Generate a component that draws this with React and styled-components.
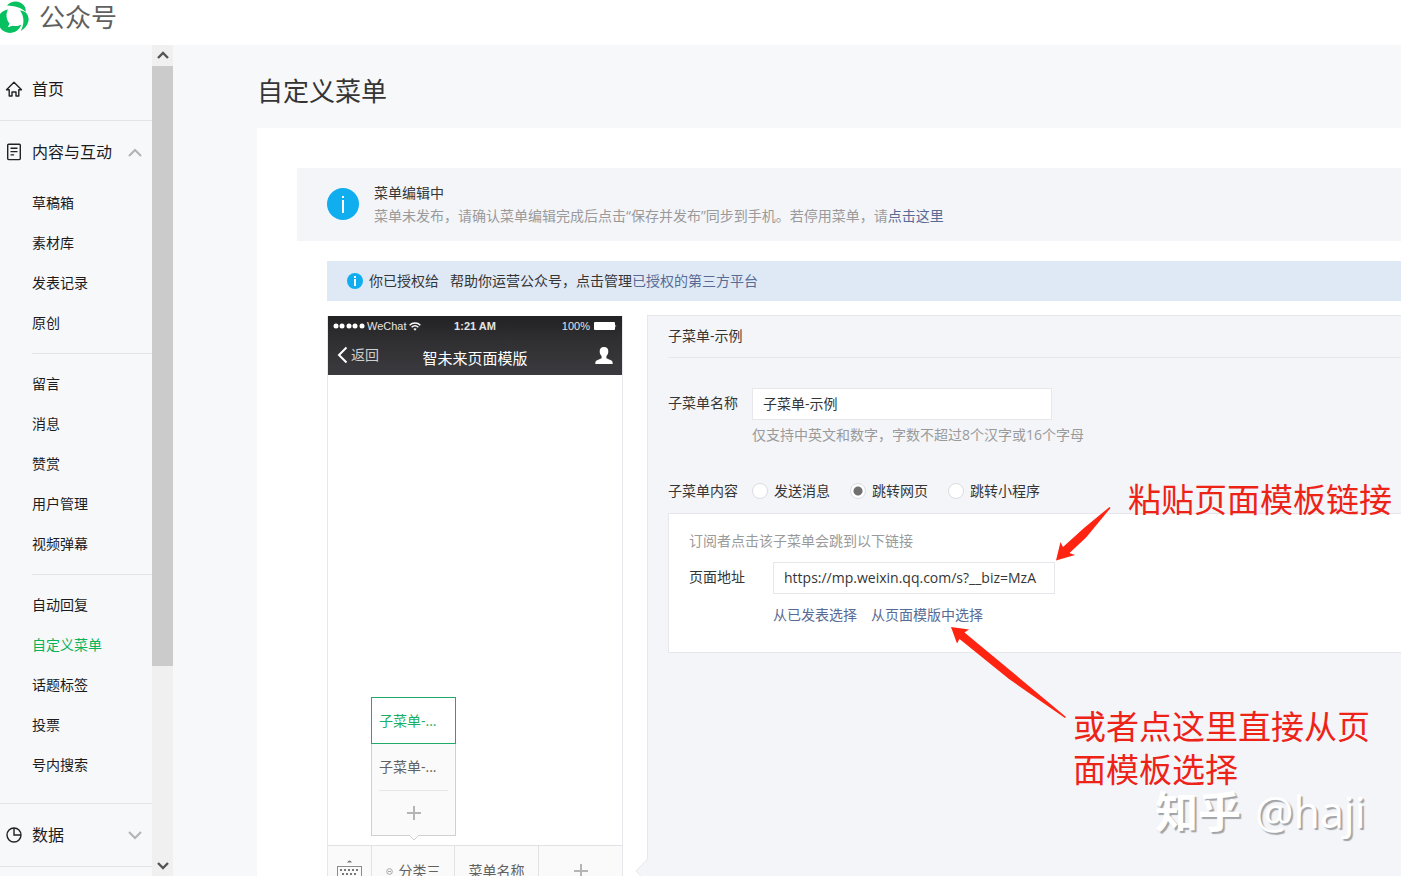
import React from "react";
import styled, { createGlobalStyle } from "styled-components";

const Global = createGlobalStyle`
  * { box-sizing: border-box; }
  body {
    margin: 0;
    background: #f7f8fa;
    color: #353535;
    font: 14px/20px "Open Sans", "Noto Sans CJK SC", sans-serif;
  }
  a { color: #576b95; text-decoration: none; }
  button { border: 0; padding: 0; background: none; color: inherit; font: inherit; cursor: pointer; }
  h1, h2, p, ul { margin: 0; padding: 0; font-weight: 400; }
  ul { list-style: none; }
`;

const Page = styled.div`
  display: flex;
  flex-direction: column;
  height: 100vh;
  overflow: hidden;
`;

const TopBar = styled.header`
  display: flex;
  flex: none;
  align-items: flex-start;
  gap: 9px;
  height: 45px;
  background: #fff;
`;

const Brand = styled.span`
  color: #606060;
  font-size: 26px;
  line-height: 34px;
`;

const Body = styled.div`
  display: flex;
  flex: 1;
  min-height: 0;
`;

/* Sidebar */

const Sidebar = styled.nav`
  flex: none;
  width: 152px;
  padding-top: 13px;
  overflow: hidden;
`;

const Section = styled.div`
  padding-bottom: ${(p) => (p.$open ? 18 : 0)}px;
  border-bottom: 1px solid #e4e5e8;
`;

const SectionHead = styled.button`
  display: flex;
  align-items: center;
  width: 100%;
  height: 62px;
  padding: 0 10px 0 5px;
  color: #1c1c1e;
  font-size: 16px;
  text-align: left;

  span { flex: 1; margin-left: 9px; }
`;

const Group = styled.ul`
  margin-left: 32px;

  & + & {
    margin-top: 10px;
    padding-top: 10px;
    border-top: 1px solid #e4e5e8;
  }
`;

const Item = styled.a`
  display: block;
  color: ${(p) => (p.$active ? "#07b35b" : "#1c1c1e")};
  line-height: 40px;
`;

const ScrollTrack = styled.div`
  display: flex;
  flex: none;
  flex-direction: column;
  width: 21px;
  background: #f0f0f0;
`;

const ScrollButton = styled.button`
  display: flex;
  align-items: center;
  justify-content: center;
  height: 21px;
`;

const ScrollSpace = styled.div`
  flex: 1;
`;

const ScrollThumb = styled.div`
  height: 76%;
  background: #cbcbcb;
`;

/* Content */

const Main = styled.main`
  display: flex;
  flex: 1;
  flex-direction: column;
  min-width: 0;
  padding: 30px 0 0 84px;
  overflow: hidden;
`;

const Title = styled.h1`
  flex: none;
  margin-bottom: 21px;
  color: #353535;
  font-size: 26px;
  line-height: 32px;
`;

const Card = styled.section`
  flex: 1 0 auto;
  padding: 40px 0 0 40px;
  background: #fff;
`;

const Alert = styled.div`
  display: flex;
  align-items: center;
  gap: 15px;
  padding: 13px 30px 14px;
  background: #f4f5f9;
  line-height: 23px;
  white-space: nowrap;
`;

const Muted = styled.p`
  color: #9a9a9a;
`;

const Inner = styled.div`
  padding: 20px 0 0 30px;
`;

const Notice = styled.div`
  display: flex;
  align-items: center;
  height: 40px;
  padding: 0 20px;
  gap: 6px;
  background: #dfe9f6;
  white-space: pre;
`;

const Editor = styled.div`
  display: flex;
  align-items: stretch;
  gap: 24px;
  margin-top: 14px;
`;

/* Phone preview */

const Phone = styled.div`
  display: flex;
  flex: none;
  flex-direction: column;
  width: 296px;
  height: 581px;
  margin-top: 1px;
  border: 1px solid #e7e7eb;
  border-top: 0;
`;

const PhoneHead = styled.div`
  flex: none;
  height: 59px;
  background: linear-gradient(#222224, #2f2f32 40%, #3b3b3f);
  color: #fff;
`;

const StatusBar = styled.div`
  display: grid;
  grid-template-columns: 1fr auto 1fr;
  align-items: center;
  height: 20px;
  padding: 0 5px;
  color: #e4e4e4;
  font: 11px/20px "Liberation Sans", sans-serif;
`;

const StatusSide = styled.span`
  display: flex;
  align-items: center;
  justify-content: ${(p) => (p.$end ? "flex-end" : "flex-start")};
  gap: ${(p) => (p.$end ? 4 : 2)}px;
`;

const NavBar = styled.div`
  display: grid;
  grid-template-columns: 1fr auto 1fr;
  align-items: center;
  height: 39px;
  padding: 0 9px;
`;

const Back = styled.button`
  display: flex;
  align-items: center;
  gap: 3px;
  padding-bottom: 2px;
  color: #cfcfcf;
`;

const PhoneTitle = styled.span`
  padding-top: 5px;
  font-size: 15px;
`;

const Avatar = styled.span`
  display: flex;
  justify-content: flex-end;
`;

const Chat = styled.div`
  display: flex;
  flex: 1;
  align-items: flex-end;
  padding: 0 0 9px 43px;
`;

const Popup = styled.div`
  position: relative;
  width: 85px;
  border: 1px solid #d0d0d0;
  border-top: 0;
  background: #fafafa;
`;

const PopupItem = styled.button`
  display: block;
  width: ${(p) => (p.$active ? 85 : 69)}px;
  height: ${(p) => (p.$active ? 47 : 46)}px;
  margin: ${(p) => (p.$active ? "0 -1px" : "0 7px")};
  padding: ${(p) => (p.$active ? "0 7px" : 0)};
  border: ${(p) => (p.$active ? "1px solid #22a868" : 0)};
  background: ${(p) => (p.$active ? "#fff" : "transparent")};
  color: ${(p) => (p.$active ? "#19b065" : "#616161")};
  text-align: left;
`;

const PopupAdd = styled.button`
  display: flex;
  align-items: center;
  justify-content: center;
  width: 69px;
  height: 45px;
  margin: 0 7px;
  border-top: 1px solid #e7e7eb;
`;

const PopupTail = styled.svg`
  position: absolute;
  top: 100%;
  left: 50%;
  margin: -1px 0 0 -6px;
`;

const MenuBar = styled.div`
  display: grid;
  grid-template-columns: 43px 83px 84px 1fr;
  flex: none;
  height: 51px;
  border-top: 1px solid #e2e2e4;
  background: #fafafa;
`;

const MenuTab = styled.button`
  display: flex;
  align-items: center;
  justify-content: center;
  gap: 6px;
  color: #616161;

  & + & { border-left: 1px solid #e2e2e4; }
`;

/* Form panel */

const Panel = styled.div`
  position: relative;
  flex: 1;
  min-width: 0;
  padding-left: 20px;
  border: 1px solid #e7e7eb;
  border-right: 0;
  background: #f4f5f9;
  white-space: nowrap;
`;

const PanelTail = styled.svg`
  position: absolute;
  top: 542px;
  left: -13px;
`;

const PanelTitle = styled.h2`
  height: 42px;
  border-bottom: 1px solid #e7e7eb;
  font-size: 14px;
  line-height: 40px;
`;

const Field = styled.div`
  display: flex;
  align-items: center;
  gap: 14px;
  margin-top: ${(p) => p.$top || 0}px;

  > label:first-child, > span:first-child { flex: none; width: 70px; }
  > label:first-child { padding-bottom: 2px; }
`;

const TextInput = styled.input`
  width: ${(p) => p.$width}px;
  height: 32px;
  padding: 0 10px 2px;
  border: 1px solid #e7e7eb;
  border-radius: 0;
  outline: 0;
  background: #fff;
  color: #353535;
  font: inherit;
`;

const FieldHint = styled(Muted)`
  margin: 5px 0 0 84px;
`;

const Options = styled.div`
  display: flex;
  gap: 20px;
`;

const Option = styled.label`
  display: flex;
  align-items: center;
  gap: 6px;
`;

const Radio = styled.input`
  appearance: none;
  width: 16px;
  height: 16px;
  margin: 0;
  border: 1px solid #dcdde0;
  border-radius: 50%;
  background: #fff;

  &:checked { background: radial-gradient(circle, #707070 0 4px, #fff 5px); }
`;

const LinkBox = styled.div`
  height: 140px;
  margin-top: 12px;
  padding: 17px 20px;
  border: 1px solid #e7e7eb;
  border-right: 0;
  background: #fff;
`;

const Picks = styled.div`
  display: flex;
  gap: 14px;
  margin: 11px 0 0 84px;
`;

/* Notes drawn over the screen */

const Note = styled.p`
  position: absolute;
  top: ${(p) => p.$y}px;
  left: ${(p) => p.$x}px;
  color: #ee2318;
  font-size: 33px;
  line-height: 43px;
`;

const Arrow = styled.svg`
  position: absolute;
  top: ${(p) => p.$y}px;
  left: ${(p) => p.$x}px;
`;

const Watermark = styled.div`
  position: absolute;
  top: 474px;
  left: 507px;
  display: flex;
  gap: 14px;
  color: #fff;
  font-size: 43px;
  line-height: 44px;
  text-shadow: 2px 2px 1px #a2a3a6;

  b { font-weight: 700; }
`;

const Plus = () => (
  <svg width="14" height="14" viewBox="0 0 14 14" stroke="#b5b5b5" strokeWidth="2" aria-hidden="true">
    <path d="M7 0v14M0 7h14" />
  </svg>
);

const Chevron = ({ up }) => (
  <svg width="14" height="9" viewBox="0 0 14 9" fill="none" stroke="#b2b3b5" strokeWidth="2" aria-hidden="true">
    <path d={up ? "M1 8l6-6 6 6" : "M1 1l6 6 6-6"} />
  </svg>
);

const ScrollArrow = ({ up }) => (
  <svg width="12" height="9" viewBox="0 0 12 9" fill="none" stroke="#555" strokeWidth="2.4" aria-hidden="true">
    <path d={up ? "M1 7l5-5 5 5" : "M1 2l5 5 5-5"} />
  </svg>
);

const Logo = () => (
  <svg width="30" height="34" viewBox="0 0 30 34" fill="#07c160" role="img" aria-label="logo">
    <path d="M7 5.500C11 1 19-.5 24 5.500c1.500 2 2 4 1.500 6.500C22 7.500 14 6 7 5.500z" />
    <path d="M20 10.500c2.500.2 4.500 1 6 2.200 4.500 5 3.500 13-5.500 18.500 3.500-6 4.500-14-.5-20.700z" />
    <path d="M8 9.500C5.500 14 6.200 20 9.500 23.500L7.800 27.200l4.700-1.500c3.200.8 6.200.3 8.700-1.200C18.500 34 5.500 36 0 27.500V14c2-2.500 5-4.200 8-4.500z" />
  </svg>
);

const iconProps = {
  width: 18, height: 18, viewBox: "0 0 18 18", fill: "none", stroke: "#222", strokeWidth: 1.4, "aria-hidden": true,
};

const HomeIcon = () => (
  <svg {...iconProps}>
    <path d="M1.500 9.700L9 2.200l7.500 7.500h-2.700v6.300h-2.800v-4H7v4H4.200V9.700z" strokeLinejoin="round" />
  </svg>
);

const DocIcon = () => (
  <svg {...iconProps}>
    <rect x="2.700" y="1.200" width="12.600" height="15.400" rx="1" />
    <path d="M5.500 5.300h7M5.500 8.600h7M5.500 11.900h3.600" />
  </svg>
);

const PieIcon = () => (
  <svg {...iconProps}>
    <circle cx="9" cy="9" r="7" />
    <path d="M9 2v7h7" />
  </svg>
);

const InfoIcon = ({ size }) => (
  <svg width={size} height={size} viewBox="0 0 32 32" aria-hidden="true">
    <circle cx="16" cy="16" r="16" fill="#10aeef" />
    {size > 20 ? (
      <path d="M15 8h2v2h-2zM15 12h2v13h-2z" fill="#fff" />
    ) : (
      <path d="M14 6h4v4h-4zM14 12h4v14h-4z" fill="#fff" />
    )}
  </svg>
);

const groups = [
  ["草稿箱", "素材库", "发表记录", "原创"],
  ["留言", "消息", "赞赏", "用户管理", "视频弹幕"],
  ["自动回复", "自定义菜单", "话题标签", "投票", "号内搜索"],
];

const options = ["发送消息", "跳转网页", "跳转小程序"];

export default function App() {
  return (
    <Page>
      <Global />
      <TopBar>
        <Logo />
        <Brand>公众号</Brand>
      </TopBar>
      <Body>
        <Sidebar>
          <Section>
            <SectionHead><HomeIcon /><span>首页</span></SectionHead>
          </Section>
          <Section $open>
            <SectionHead><DocIcon /><span>内容与互动</span><Chevron up /></SectionHead>
            {groups.map((names) => (
              <Group key={names[0]}>
                {names.map((name) => (
                  <li key={name}><Item href="#" $active={name === "自定义菜单"}>{name}</Item></li>
                ))}
              </Group>
            ))}
          </Section>
          <Section>
            <SectionHead><PieIcon /><span>数据</span><Chevron /></SectionHead>
          </Section>
        </Sidebar>
        <ScrollTrack>
          <ScrollButton aria-label="向上滚动"><ScrollArrow up /></ScrollButton>
          <ScrollSpace><ScrollThumb /></ScrollSpace>
          <ScrollButton aria-label="向下滚动"><ScrollArrow /></ScrollButton>
        </ScrollTrack>

        <Main>
          <Title>自定义菜单</Title>
          <Card>
            <Alert>
              <InfoIcon size={32} />
              <div>
                <p>菜单编辑中</p>
                <Muted>菜单未发布，请确认菜单编辑完成后点击“保存并发布”同步到手机。若停用菜单，请<a href="#">点击这里</a></Muted>
              </div>
            </Alert>
            <Inner>
              <Notice>
                <InfoIcon size={16} />
                <span>{"你已授权给   帮助你运营公众号，点击管理"}<a href="#">已授权的第三方平台</a></span>
              </Notice>
              <Editor>
                <Phone>
                  <PhoneHead>
                    <StatusBar>
                      <StatusSide>
                        <svg width="32" height="6" viewBox="0 0 32 6" fill="#fff" aria-hidden="true">
                          {[3, 9, 16, 22, 29].map((x) => <circle key={x} cx={x} cy="3" r="2.500" />)}
                        </svg>
                        WeChat
                        <svg width="12" height="9" viewBox="0 0 12 9" fill="none" stroke="#fff" strokeWidth="1.400" aria-hidden="true">
                          <path d="M.6 3.200c3-3 7.800-3 10.800 0M2.600 5.300c2-1.900 4.800-1.900 6.800 0" />
                          <path d="M4.300 6.800Q6 5.500 7.700 6.800L6 8.800z" fill="#fff" stroke="none" />
                        </svg>
                      </StatusSide>
                      <b>1:21 AM</b>
                      <StatusSide $end>
                        100%
                        <svg width="23" height="8" viewBox="0 0 23 8" fill="#fff" aria-hidden="true">
                          <rect width="21" height="8" rx="1" />
                          <path d="M21.500 2.500q1.500 1.500 0 3z" />
                        </svg>
                      </StatusSide>
                    </StatusBar>
                    <NavBar>
                      <Back>
                        <svg width="11" height="18" viewBox="0 0 11 18" fill="none" stroke="#fff" strokeWidth="2" aria-hidden="true">
                          <path d="M9.500 1.500L2 9l7.500 7.500" />
                        </svg>
                        返回
                      </Back>
                      <PhoneTitle>智未来页面模版</PhoneTitle>
                      <Avatar>
                        <svg width="18" height="18" viewBox="0 0 18 18" fill="#fff" aria-hidden="true">
                          <path d="M9 0c3 0 4.500 2 4.300 4.800-.1 2-.9 3.300-1.900 4.400v2l5 2.300c1 .5 1.300 1.500 1.300 3.500H.3c0-2 .3-3 1.300-3.500l5-2.300v-2C5.600 8.100 4.800 6.800 4.700 4.800 4.500 2 6 0 9 0z" />
                        </svg>
                      </Avatar>
                    </NavBar>
                  </PhoneHead>
                  <Chat>
                    <Popup>
                      <PopupItem $active>子菜单-...</PopupItem>
                      <PopupItem>子菜单-...</PopupItem>
                      <PopupAdd aria-label="添加子菜单"><Plus /></PopupAdd>
                      <PopupTail width="12" height="7" viewBox="0 0 12 7" fill="#fafafa" stroke="#d0d0d0">
                        <path d="M1 1l5 5 5-5" />
                        <path d="M1 .5h10" stroke="#fafafa" />
                      </PopupTail>
                    </Popup>
                  </Chat>
                  <MenuBar>
                    <MenuTab aria-label="键盘">
                      <svg width="25" height="23" viewBox="0 0 25 23" fill="none" stroke="#8c8c8c" aria-hidden="true">
                        <path d="M10 2.500q2.500-4 5 0z" fill="#777" stroke="none" />
                        <rect x=".5" y="6.500" width="24" height="16" />
                        <path d="M3 10h19M5 14h16" stroke="#777" strokeWidth="2" strokeDasharray="2 2" />
                        <path d="M6 18.500h13" stroke="#777" strokeWidth="2" />
                      </svg>
                    </MenuTab>
                    <MenuTab>
                      <svg width="7" height="7" viewBox="0 0 7 7" fill="none" stroke="#a5a5a5" aria-hidden="true">
                        <circle cx="3.500" cy="3.500" r="2.800" />
                        <path d="M2 3.500h3" />
                      </svg>
                      分类三
                    </MenuTab>
                    <MenuTab>菜单名称</MenuTab>
                    <MenuTab aria-label="添加菜单"><Plus /></MenuTab>
                  </MenuBar>
                </Phone>

                <Panel>
                  <PanelTail width="13" height="26" viewBox="0 0 13 26" fill="#f4f5f9" stroke="#e7e7eb" aria-hidden="true">
                    <path d="M13 .5L1 13l12 12.500" />
                  </PanelTail>
                  <PanelTitle>子菜单-示例</PanelTitle>
                  <Field $top={30}>
                    <label htmlFor="name">子菜单名称</label>
                    <TextInput id="name" $width={300} defaultValue="子菜单-示例" />
                  </Field>
                  <FieldHint>仅支持中英文和数字，字数不超过8个汉字或16个字母</FieldHint>
                  <Field $top={36}>
                    <span>子菜单内容</span>
                    <Options>
                      {options.map((name) => (
                        <Option key={name}>
                          <Radio type="radio" name="kind" defaultChecked={name === "跳转网页"} />
                          {name}
                        </Option>
                      ))}
                    </Options>
                  </Field>
                  <LinkBox>
                    <Muted>订阅者点击该子菜单会跳到以下链接</Muted>
                    <Field $top={11}>
                      <label htmlFor="url">页面地址</label>
                      <TextInput id="url" $width={282} defaultValue="https://mp.weixin.qq.com/s?__biz=MzA" />
                    </Field>
                    <Picks>
                      <a href="#">从已发表选择</a>
                      <a href="#">从页面模版中选择</a>
                    </Picks>
                  </LinkBox>

                  <Arrow $x={407} $y={190} width="58" height="56" viewBox="0 0 58 56" fill="#ff2312" aria-hidden="true">
                    <path d="M1 54.500L5.500 36 8 41 29 22 54.500 1l1 1-24 29L14.500 47l5.500 2z" />
                  </Arrow>
                  <Arrow $x={302} $y={310} width="118" height="94" viewBox="0 0 118 94" fill="#ff2312" aria-hidden="true">
                    <path d="M1 1l18 2.500-4.500 3L64 47.500l52 43.500-1 1L59 53 9.500 13 7 17.500z" />
                  </Arrow>
                  <Note $x={480} $y={162}>粘贴页面模板链接</Note>
                  <Note $x={425} $y={389}>或者点这里直接从页<br />面模板选择</Note>
                  <Watermark><b>知乎</b><span>@haji</span></Watermark>
                </Panel>
              </Editor>
            </Inner>
          </Card>
        </Main>
      </Body>
    </Page>
  );
}
